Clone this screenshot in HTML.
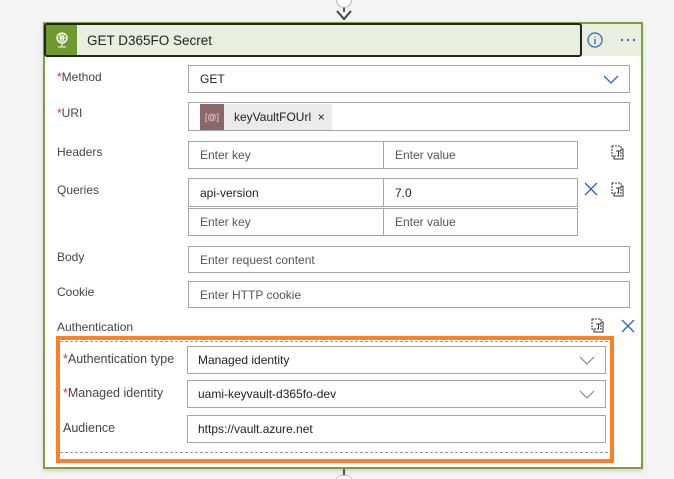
<!DOCTYPE html><html><head><style>
html{width:674px;height:479px;overflow:hidden}
body{margin:0;width:674px;height:479px;background:#f4f4f4;font-family:"Liberation Sans",sans-serif;position:relative;overflow:hidden;font-size:12px;color:#333}
.a{position:absolute}
.box{position:absolute;border:1px solid #a6a6a6;background:#fff;box-sizing:border-box;padding-left:11px;display:flex;align-items:center;color:#222}
.ph{color:#555}
.lbl{position:absolute;color:#444;font-size:12px}
.req{color:#d13438}
.chev{position:absolute;right:10px;top:7px}
</style></head><body>
<div class="a" style="left:343px;top:0;width:2px;height:12px;background:#555"></div>
<div class="a" style="left:336px;top:-8px;width:14px;height:14px;border:1px solid #bbb;border-radius:50%;background:#fff"></div>
<svg class="a" style="left:336px;top:9px" width="16" height="12"><path d="M1 2 L8 10 L15 2" stroke="#444" stroke-width="2" fill="none"/></svg>
<div class="a" style="left:43px;top:22px;width:600px;height:447px;border:2px solid #7aa13a;box-sizing:border-box;background:#fff;box-shadow:0 2px 4px rgba(0,0,0,.15)"></div>
<div class="a" style="left:45px;top:24px;width:596px;height:32px;background:#e8efdf"></div>
<div class="a" style="left:44px;top:23px;width:538px;height:34px;border:2px solid #222;border-radius:3px;box-sizing:border-box;background:#e8efdf;overflow:hidden">
<div class="a" style="left:0;top:0;width:31px;height:30px;background:#6d9a2d"></div>
<svg class="a" style="left:8px;top:6px" width="16" height="18"><circle cx="8" cy="7" r="5" stroke="#fff" fill="none" stroke-width="1.3"/><path d="M3 7h10M8 2v10M5.5 3c1.5 2.5 1.5 6 0 8M10.5 3c-1.5 2.5-1.5 6 0 8M8 12v3M4 16h8" stroke="#fff" fill="none" stroke-width="1.1"/></svg>
<div class="a" style="left:41px;top:8px;font-size:13.5px;color:#222">GET D365FO Secret</div></div>
<svg class="a" style="left:587px;top:32px" width="16" height="16"><circle cx="8" cy="8" r="7" stroke="#2266c4" fill="none" stroke-width="1.2"/><path d="M8 7v5M8 4.5v1" stroke="#2266c4" stroke-width="1.3"/></svg>
<svg class="a" style="left:620px;top:38px" width="16" height="4"><circle cx="2" cy="2" r="1.1" fill="#2266c4"/><circle cx="8" cy="2" r="1.1" fill="#2266c4"/><circle cx="14" cy="2" r="1.1" fill="#2266c4"/></svg>

<div class="lbl" style="left:57px;top:70px"><span class="req">*</span>Method</div>
<div class="box" style="left:188px;top:65px;width:442px;height:28px">GET<svg class="chev" width="16" height="12"><path d="M1 3l7 7 7-7" stroke="#2266c4" fill="none" stroke-width="1.3"/></svg></div>
<div class="lbl" style="left:57px;top:106px"><span class="req">*</span>URI</div>
<div class="box" style="left:188px;top:102px;width:442px;height:29px;padding-left:11px">
<div style="width:24px;height:26px;background:#8c6767;color:#ddd;font-size:9px;display:flex;align-items:center;justify-content:center">[@]</div>
<div style="height:26px;background:#ecebea;padding:0 7px 0 10px;display:flex;align-items:center;color:#222">keyVaultFOUrl &nbsp;×</div></div>

<div class="lbl" style="left:57px;top:145px">Headers</div>
<div class="box ph" style="left:188px;top:141px;width:196px;height:28px">Enter key</div>
<div class="box ph" style="left:383px;top:141px;width:195px;height:28px">Enter value</div>
<svg class="a" style="left:611px;top:145px" width="14" height="16"><rect x="3" y="4" width="9" height="10" stroke="#333" fill="none"/><rect x="1" y="1" width="9" height="10" stroke="#333" fill="#fff" stroke-dasharray="2 1"/><path d="M5 6h5M7.5 6v5" stroke="#333"/></svg>

<div class="lbl" style="left:57px;top:183px">Queries</div>
<div class="box" style="left:188px;top:178px;width:196px;height:29px">api-version</div>
<div class="box" style="left:383px;top:178px;width:195px;height:29px">7.0</div>
<div class="box ph" style="left:188px;top:208px;width:196px;height:28px">Enter key</div>
<div class="box ph" style="left:383px;top:208px;width:195px;height:28px">Enter value</div>
<svg class="a" style="left:584px;top:182px" width="14" height="14"><path d="M1 1l12 12M13 1L1 13" stroke="#2266c4" stroke-width="1.3"/></svg>
<svg class="a" style="left:611px;top:182px" width="14" height="16"><rect x="3" y="4" width="9" height="10" stroke="#333" fill="none"/><rect x="1" y="1" width="9" height="10" stroke="#333" fill="#fff" stroke-dasharray="2 1"/><path d="M5 6h5M7.5 6v5" stroke="#333"/></svg>

<div class="lbl" style="left:57px;top:250px">Body</div>
<div class="box ph" style="left:188px;top:246px;width:442px;height:27px">Enter request content</div>
<div class="lbl" style="left:57px;top:285px">Cookie</div>
<div class="box ph" style="left:188px;top:281px;width:442px;height:27px">Enter HTTP cookie</div>

<div class="lbl" style="left:57px;top:320px">Authentication</div>
<svg class="a" style="left:591px;top:318px" width="14" height="16"><rect x="3" y="4" width="9" height="10" stroke="#333" fill="none"/><rect x="1" y="1" width="9" height="10" stroke="#333" fill="#fff" stroke-dasharray="2 1"/><path d="M5 6h5M7.5 6v5" stroke="#333"/></svg>
<svg class="a" style="left:621px;top:319px" width="14" height="14"><path d="M1 1l12 12M13 1L1 13" stroke="#2266c4" stroke-width="1.3"/></svg>

<div class="a" style="left:56px;top:336px;width:558px;height:127px;border:4px solid #ff7f27;box-sizing:border-box"></div>
<div class="a" style="left:60px;top:341px;width:548px;border-top:1px dashed #999"></div>
<div class="a" style="left:60px;top:452px;width:548px;border-top:1px dashed #999"></div>
<div class="lbl" style="left:63px;top:352px;font-size:12.5px"><span class="req">*</span>Authentication type</div>
<div class="box" style="left:187px;top:346px;width:419px;height:28px;padding-left:10px">Managed identity<svg class="chev" width="16" height="12"><path d="M1 3l7 7 7-7" stroke="#888" fill="none" stroke-width="1.2"/></svg></div>
<div class="lbl" style="left:63px;top:386px;font-size:12.5px"><span class="req">*</span>Managed identity</div>
<div class="box" style="left:187px;top:380px;width:419px;height:28px;padding-left:10px">uami-keyvault-d365fo-dev<svg class="chev" width="16" height="12"><path d="M1 3l7 7 7-7" stroke="#888" fill="none" stroke-width="1.2"/></svg></div>
<div class="lbl" style="left:63px;top:421px;font-size:12.5px">Audience</div>
<div class="box" style="left:187px;top:415px;width:419px;height:28px;padding-left:10px">https://vault.azure.net</div>

<div class="a" style="left:343px;top:469px;width:2px;height:6px;background:#555"></div>
<div class="a" style="left:336px;top:475px;width:14px;height:4px;border:1px solid #bbb;border-bottom:none;border-radius:7px 7px 0 0;background:#fff"></div>
</body></html>
